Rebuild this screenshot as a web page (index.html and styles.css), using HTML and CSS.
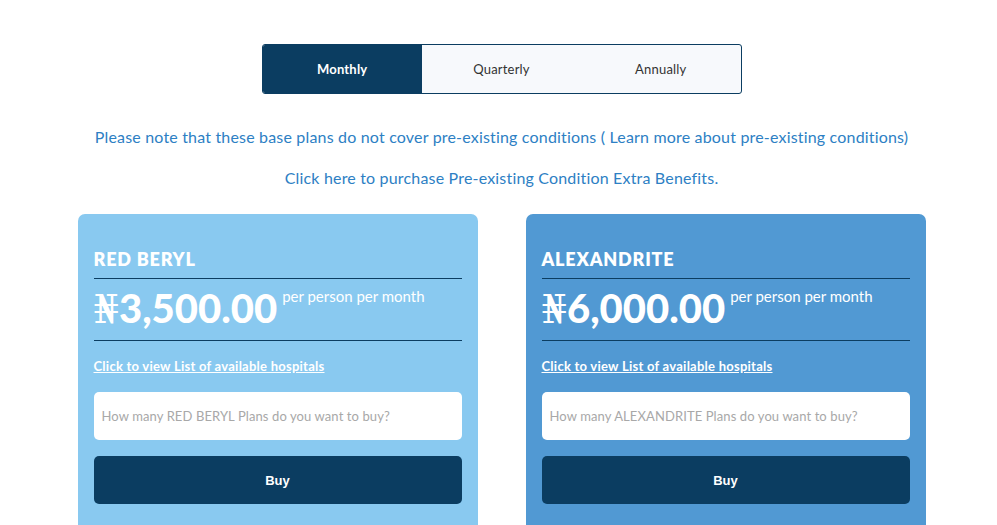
FILE: index.html
```html
<!DOCTYPE html>
<html lang="en">
<head>
  <meta charset="UTF-8">
  <meta name="viewport" content="width=device-width, initial-scale=1.0">
  <title>Health Plans</title>
  <link rel="stylesheet" href="styles.css">
</head>
<body>
  <div id="plans-page">
    <div class="period-toggle">
      <a href="#" class="period active">Monthly</a>
      <a href="#" class="period">Quarterly</a>
      <a href="#" class="period">Annually</a>
    </div>

    <p class="note">Please note that these base plans do not cover pre-existing conditions ( <a href="#">Learn more about pre-existing conditions</a>)</p>
    <p class="note"><a href="#">Click here to purchase Pre-existing Condition Extra Benefits.</a></p>

    <div class="plans">
      <div class="plan plan-light">
        <h2 class="plan-name">RED BERYL</h2>
        <div class="plan-price">
          <span class="amount"><span class="naira">&#8358;</span>3,500.00</span>
          <span class="per">per person per month</span>
        </div>
        <a href="#" class="hospitals">Click to view List of available hospitals</a>
        <input type="number" class="qty" placeholder="How many RED BERYL Plans do you want to buy?">
        <a href="#" class="buy">Buy</a>
      </div>

      <div class="plan plan-dark">
        <h2 class="plan-name">ALEXANDRITE</h2>
        <div class="plan-price">
          <span class="amount"><span class="naira">&#8358;</span>6,000.00</span>
          <span class="per">per person per month</span>
        </div>
        <a href="#" class="hospitals">Click to view List of available hospitals</a>
        <input type="number" class="qty" placeholder="How many ALEXANDRITE Plans do you want to buy?">
        <a href="#" class="buy">Buy</a>
      </div>
    </div>
  </div>
</body>
</html>
```

FILE: styles.css
```css
body {
  margin: 0;
  font-family: Lato, "Open Sans", sans-serif;
  background: #ffffff;
  overflow: hidden;
}

#plans-page {
  padding-top: 44px;
  padding-left: 6px;
  text-align: center;
}

.period-toggle {
  display: inline-flex;
  width: 478px;
  height: 48px;
  border: 1px solid #0b3d61;
  border-radius: 3px;
  overflow: hidden;
  background: #f7f9fc;
}

.period {
  flex: 1;
  display: flex;
  align-items: center;
  justify-content: center;
  font-size: 13px;
  letter-spacing: 0.2px;
  color: #333;
  text-decoration: none;
}

.period.active {
  background: #0b3d61;
  color: #fff;
  font-weight: bold;
}

.note {
  margin: 0;
  font-size: 16px;
  letter-spacing: 0.18px;
  color: #2d80c4;
  line-height: 20px;
}

.note:first-of-type {
  margin-top: 33px;
}

.note + .note {
  margin-top: 21px;
}

.note a {
  color: #2d80c4;
  text-decoration: none;
}

.plans {
  display: flex;
  justify-content: center;
  gap: 48px;
  margin-top: 26px;
}

.plan {
  width: 368px;
  padding: 33px 16px 40px;
  border-radius: 7px;
  text-align: left;
  display: flex;
  flex-direction: column;
}

.plan-light {
  background: #89c9f0;
}

.plan-dark {
  background: #5199d3;
}

.plan-name {
  margin: 0;
  padding-bottom: 7px;
  border-bottom: 1px solid #0b3d61;
  color: #fff;
  font-size: 18px;
  font-weight: 800;
  letter-spacing: 0.8px;
  line-height: 24px;
}

.plan-price {
  display: flex;
  align-items: flex-start;
  padding: 4px 0 6px;
  border-bottom: 1px solid #0b3d61;
  color: #fff;
}

.amount {
  font-size: 40px;
  font-weight: 900;
  line-height: 50px;
}

.naira {
  font-family: "DejaVu Serif", "Liberation Serif", serif;
  font-weight: normal;
}

.per {
  font-size: 15px;
  line-height: 18px;
  margin-left: 5px;
  margin-top: 4px;
}

.hospitals {
  margin-top: 16px;
  color: #fff;
  font-size: 13px;
  font-weight: bold;
  letter-spacing: 0.25px;
  line-height: 18px;
  align-self: flex-start;
}

.qty {
  margin-top: 17px;
  height: 48px;
  border: none;
  border-radius: 5px;
  padding: 0 8px;
  font-family: Lato, sans-serif;
  font-size: 13px;
  letter-spacing: 0.1px;
  box-sizing: border-box;
  outline: none;
}

.qty::placeholder {
  color: #a8a8a8;
}

.buy {
  margin-top: 16px;
  height: 48px;
  border-radius: 5px;
  background: #0b3d61;
  color: #fff;
  font-family: "Liberation Sans", Arial, sans-serif;
  font-size: 13px;
  font-weight: bold;
  text-decoration: none;
  display: flex;
  align-items: center;
  justify-content: center;
}
```
